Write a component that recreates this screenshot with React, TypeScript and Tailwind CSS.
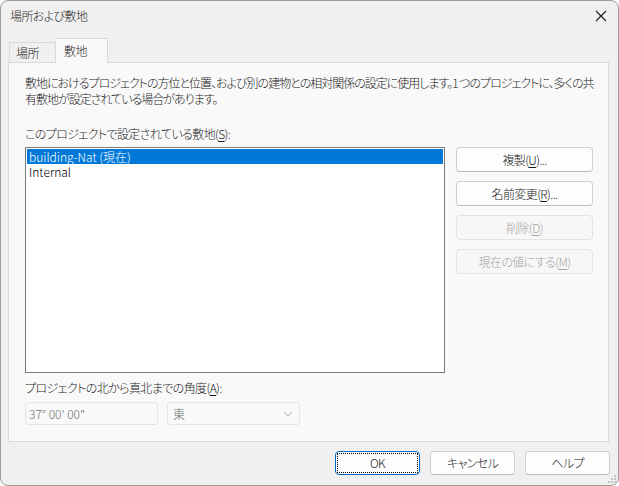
import React from "react";

const font = "font-['Noto_Sans_CJK_JP','Noto_Sans',sans-serif] [font-feature-settings:'palt'] font-light";

function Key({ children }: { children: React.ReactNode }) {
  return <span className="underline underline-offset-2">{children}</span>;
}

function SideButton({ children, disabled }: { children: React.ReactNode; disabled?: boolean }) {
  return (
    <button
      className={
        disabled
          ? "h-[25px] w-[137px] rounded-[4px] border border-[#e3e3e3] bg-[#f7f7f7] text-[12px] text-[#a3a3a3]"
          : "h-[25px] w-[137px] rounded-[4px] border border-[#d0d0d0] border-b-[#bcbcbc] bg-[#fdfdfd] text-[12px] text-[#1b1b1b]"
      }
    >
      {children}
    </button>
  );
}

function FooterButton({ children, focused }: { children: React.ReactNode; focused?: boolean }) {
  if (focused) {
    return (
      <button className="h-[24px] w-[85px] rounded-[4px] border border-[#0067c0] bg-[#fdfdfd] p-[1px] text-[12px] text-[#1b1b1b]">
        <div className="flex h-full w-full items-center justify-center border border-dotted border-black">
          {children}
        </div>
      </button>
    );
  }
  return (
    <button className="h-[24px] w-[85px] rounded-[4px] border border-[#d0d0d0] border-b-[#bcbcbc] bg-[#fdfdfd] text-[12px] text-[#1b1b1b]">
      {children}
    </button>
  );
}

export default function App() {
  return (
    <div className={`${font} flex h-[486px] w-[619px] flex-col overflow-hidden rounded-[8px] border border-[#9b9b9b] bg-[#f0f0f0] text-[12px] leading-[16px] tracking-[-0.6px] text-[#1b1b1b]`}>
      {/* Title bar */}
      <div className="flex h-[29px] shrink-0 items-center justify-between pl-[9px] pr-[10px]">
        <span className="text-[12px]">場所および敷地</span>
        <svg width="12" height="12" viewBox="0 0 12 12" className="mr-[1px]">
          <path d="M1 1L11 11M11 1L1 11" stroke="#1b1b1b" strokeWidth="1.1" fill="none" />
        </svg>
      </div>

      {/* Tabs */}
      <div className="flex h-[32px] shrink-0 items-end pl-[8px]">
        <div className="flex h-[20px] w-[47px] items-center border border-b-0 border-[#d9d9d9] bg-[#f0f0f0] pl-[6px] pt-[1px]">
          場所
        </div>
        <div className="relative z-10 -mb-px flex h-[25px] w-[52px] items-start border border-b-0 border-l-0 border-[#d9d9d9] bg-[#f9f9f9] pl-[8px] pt-[4px]">
          敷地
        </div>
      </div>

      {/* Panel */}
      <div className="ml-[7px] mr-[9px] flex h-[380px] shrink-0 flex-col border border-[#d9d9d9] bg-[#f9f9f9] pl-[16px] pt-[12px]">
        <p className="whitespace-nowrap tracking-[-1px]">
          敷地におけるプロジェクトの方位と位置、および別の建物との相対関係の設定に使用します。1&nbsp;つのプロジェクトに、多くの共
          <br />
          有敷地が設定されている場合があります。
        </p>

        <div className="mt-[19px]">
          このプロジェクトで設定されている敷地(<Key>S</Key>):
        </div>

        <div className="mt-[5px] flex">
          <div className="h-[226px] w-[420px] border border-[#7a7a7a] bg-white p-[1px] tracking-normal">
            <div className="h-[15px] bg-[#0078d7] pl-[2px] leading-[15px] text-white">building-Nat (現在)</div>
            <div className="h-[15px] pl-[2px] leading-[15px] text-black">Internal</div>
          </div>
          <div className="ml-[11px] flex flex-col gap-[9px]">
            <SideButton>
              複製(<Key>U</Key>)...
            </SideButton>
            <SideButton>
              名前変更(<Key>R</Key>)...
            </SideButton>
            <SideButton disabled>
              削除(<Key>D</Key>)
            </SideButton>
            <SideButton disabled>
              現在の値にする(<Key>M</Key>)
            </SideButton>
          </div>
        </div>

        <div className="mt-[7px]">
          プロジェクトの北から真北までの角度(<Key>A</Key>):
        </div>

        <div className="mt-[6px] flex gap-[9px]">
          <div className="flex h-[23px] w-[133px] items-center rounded-[3px] border border-[#e5e5e5] bg-[#f9f9f9] pl-[3px] tracking-normal text-[#707070]">
            37° 00' 00"
          </div>
          <div className="flex h-[23px] w-[133px] items-center justify-between rounded-[3px] border border-[#e5e5e5] bg-[#f9f9f9] pl-[5px] pr-[6px] text-[#707070]">
            <span>東</span>
            <svg width="10" height="6" viewBox="0 0 10 6">
              <path d="M1 0.8L5 4.8L9 0.8" stroke="#a8a8a8" strokeWidth="1" fill="none" />
            </svg>
          </div>
        </div>
      </div>

      {/* Footer */}
      <div className="relative flex flex-1 items-start justify-end gap-[10px] pr-[8px] pt-[9px]">
        <FooterButton focused>OK</FooterButton>
        <FooterButton>キャンセル</FooterButton>
        <FooterButton>ヘルプ</FooterButton>
        <svg width="8" height="8" viewBox="0 0 8 8" className="absolute bottom-[2px] right-[2px]">
          <rect x="6" y="0" width="2" height="2" fill="#c4c4c4" />
          <rect x="3" y="3" width="2" height="2" fill="#c4c4c4" />
          <rect x="6" y="3" width="2" height="2" fill="#c4c4c4" />
          <rect x="0" y="6" width="2" height="2" fill="#c4c4c4" />
          <rect x="3" y="6" width="2" height="2" fill="#c4c4c4" />
          <rect x="6" y="6" width="2" height="2" fill="#c4c4c4" />
        </svg>
      </div>
    </div>
  );
}
